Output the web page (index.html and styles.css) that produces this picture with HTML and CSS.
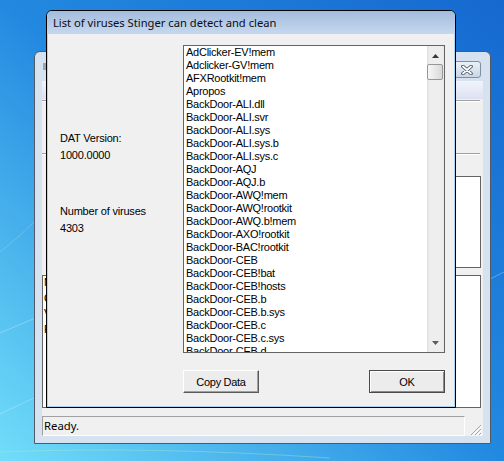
FILE: index.html
```html
<!DOCTYPE html>
<html>
<head>
<meta charset="utf-8">
<title>Stinger</title>
<link rel="stylesheet" href="styles.css">
</head>
<body>
<div class="desktop">
  <svg class="streaks" width="504" height="461" viewBox="0 0 504 461">
    <path d="M0 333 L40 316" stroke="#ffffff" stroke-opacity="0.28" stroke-width="1" fill="none"/>
    <path d="M0 414 L36 397" stroke="#ffffff" stroke-opacity="0.25" stroke-width="1" fill="none"/>
    <path d="M0 252 Q18 238 34 222" stroke="#ffffff" stroke-opacity="0.18" stroke-width="1" fill="none"/>
    <path d="M0 452 Q150 446 330 458" stroke="#b8f0c8" stroke-opacity="0.35" stroke-width="1" fill="none"/>
    <path d="M490 279 L504 272" stroke="#ffffff" stroke-opacity="0.3" stroke-width="1" fill="none"/>
  </svg>

  <div class="bgwin">
    <div class="bg-title">
      <div class="bg-icon"></div>
      <div class="bg-close">
        <svg width="12" height="10" viewBox="0 0 12 10">
          <path d="M2 1.5 L10 8.5 M10 1.5 L2 8.5" stroke="#4a5564" stroke-width="3.6" stroke-linecap="round" fill="none"/>
          <path d="M2 1.5 L10 8.5 M10 1.5 L2 8.5" stroke="#ffffff" stroke-width="1.8" stroke-linecap="round" fill="none"/>
        </svg>
      </div>
    </div>
    <div class="bg-client">
      <div class="menubar"></div>
      <div class="etch"></div>
      <div class="etch lower"></div>
      <div class="upper-box"></div>
      <div class="log-box">
        <div class="log-lines">
          <div>Number of viruses: 4303</div>
          <div>Opening DAT files</div>
          <div>Version 1000.0000</div>
          <div>Ready to scan</div>
        </div>
      </div>
      <div class="statusbar">
        <div class="status-panel">Ready.</div>
        <div class="grip">
          <svg width="13" height="13" viewBox="0 0 13 13">
            <path d="M12 2 L2 12 M12 6 L6 12 M12 10 L10 12" stroke="#a6a6a6" stroke-width="1" fill="none"/>
            <path d="M13 3 L3 13 M13 7 L7 13 M13 11 L11 13" stroke="#ffffff" stroke-width="1" fill="none"/>
          </svg>
        </div>
      </div>
    </div>
  </div>

  <div class="dialog">
    <div class="dlg-title">List of viruses Stinger can detect and clean</div>
    <div class="dlg-body">
      <div class="dlg-main">
        <div class="info">
          <div class="info-label">DAT Version:</div>
          <div class="info-value">1000.0000</div>
          <div class="info-label second">Number of viruses</div>
          <div class="info-value">4303</div>
        </div>
        <div class="listbox">
          <ul class="items">
            <li>AdClicker-EV!mem</li>
            <li>Adclicker-GV!mem</li>
            <li>AFXRootkit!mem</li>
            <li>Apropos</li>
            <li>BackDoor-ALI.dll</li>
            <li>BackDoor-ALI.svr</li>
            <li>BackDoor-ALI.sys</li>
            <li>BackDoor-ALI.sys.b</li>
            <li>BackDoor-ALI.sys.c</li>
            <li>BackDoor-AQJ</li>
            <li>BackDoor-AQJ.b</li>
            <li>BackDoor-AWQ!mem</li>
            <li>BackDoor-AWQ!rootkit</li>
            <li>BackDoor-AWQ.b!mem</li>
            <li>BackDoor-AXO!rootkit</li>
            <li>BackDoor-BAC!rootkit</li>
            <li>BackDoor-CEB</li>
            <li>BackDoor-CEB!bat</li>
            <li>BackDoor-CEB!hosts</li>
            <li>BackDoor-CEB.b</li>
            <li>BackDoor-CEB.b.sys</li>
            <li>BackDoor-CEB.c</li>
            <li>BackDoor-CEB.c.sys</li>
            <li>BackDoor-CEB.d</li>
          </ul>
          <div class="vscroll">
            <div class="sb-btn up">
              <svg width="7" height="4" viewBox="0 0 7 4"><path d="M0 4 L3.5 0 L7 4 Z" fill="#3a3a3a"/></svg>
            </div>
            <div class="sb-track"><div class="sb-thumb"></div></div>
            <div class="sb-btn down">
              <svg width="7" height="4" viewBox="0 0 7 4"><path d="M0 0 L7 0 L3.5 4 Z" fill="#5c5c5c"/></svg>
            </div>
          </div>
        </div>
      </div>
      <div class="dlg-buttons">
        <button class="btn copy">Copy Data</button>
        <button class="btn default">OK</button>
      </div>
    </div>
  </div>
</div>
</body>
</html>
```
FILE: styles.css
```css
* {
  box-sizing: border-box;
}

html,
body {
  margin: 0;
  padding: 0;
}

body {
  width: 504px;
  height: 461px;
  overflow: hidden;
  font-family: "Liberation Sans", Arial, sans-serif;
}

.desktop {
  position: relative;
  width: 504px;
  height: 461px;
  overflow: hidden;
  background: linear-gradient(to bottom left, #1669cf 0%, #2289e0 50%, #72def9 100%);
}

.streaks {
  position: absolute;
  left: 0;
  top: 0;
}

/* ---------- background Stinger window ---------- */
.bgwin {
  position: absolute;
  left: 34px;
  top: 51px;
  width: 457px;
  height: 393px;
  border: 1px solid #505a66;
  border-radius: 6px 6px 0 0;
  background: #d6e2f0;
  padding: 0 7px 7px;
  display: flex;
  flex-direction: column;
}

.bg-title {
  height: 29px;
  flex: none;
  display: flex;
  justify-content: space-between;
  align-items: flex-start;
  padding-top: 9px;
}

.bg-icon {
  width: 14px;
  height: 7px;
  margin: 2px 0 0 1px;
  background: #9aa5b2;
}

.bg-close {
  width: 29px;
  height: 17px;
  margin-right: 2px;
  border: 1px solid #7f8fa3;
  border-radius: 3px;
  background: linear-gradient(#eaf0f7, #cbd6e5);
  display: flex;
  align-items: center;
  justify-content: center;
}

.bg-client {
  flex: 1;
  background: #f0f0f0;
  display: flex;
  flex-direction: column;
}

.menubar {
  height: 18px;
  flex: none;
  background: linear-gradient(#f2f4fb, #dce1f2);
}

.etch {
  flex: none;
  margin: 1px 3px 0 0;
  border-top: 1px solid #a0a0a0;
  border-bottom: 1px solid #ffffff;
}

.etch.lower {
  margin-top: 51px;
}

.upper-box {
  flex: none;
  height: 92px;
  margin: 21px 2px 0 200px;
  border: 1px solid #646464;
  background: #ffffff;
}

.log-box {
  flex: none;
  height: 133px;
  margin: 7px 2px 0 0;
  border: 1px solid #646464;
  background: #ffffff;
  padding-left: 1px;
  overflow: hidden;
  font-size: 11px;
  line-height: 15.7px;
  color: #000;
}

.log-lines {
  margin-top: -1px;
}

.statusbar {
  flex: none;
  height: 20px;
  margin-top: 8px;
  display: flex;
}

.status-panel {
  width: 423px;
  border-top: 1px solid #a0a0a0;
  border-left: 1px solid #a0a0a0;
  border-right: 1px solid #ffffff;
  border-bottom: 1px solid #ffffff;
  padding-left: 1px;
  font-family: "Noto Sans", "Open Sans", sans-serif;
  font-size: 11.3px;
  line-height: 18px;
  color: #000;
}

.grip {
  flex: 1;
  display: flex;
  align-items: flex-end;
  justify-content: flex-end;
  padding-right: 1px;
}

.grip svg {
  display: block;
}

/* ---------- dialog ---------- */
.dialog {
  position: absolute;
  left: 46px;
  top: 10px;
  width: 410px;
  height: 398px;
  border: 1px solid #000;
  border-radius: 6px 6px 0 0;
  overflow: hidden;
  background: #c4d7ee;
  display: flex;
  flex-direction: column;
}

.dlg-title {
  height: 23px;
  flex: none;
  padding-left: 6px;
  background: linear-gradient(#a3bcdc, #c5d8ef);
  font-family: "Noto Sans", "Open Sans", sans-serif;
  font-size: 11.2px;
  line-height: 23px;
  color: #0c0c14;
  white-space: nowrap;
}

.dlg-body {
  flex: 1;
  background: #f0f0f0;
  border: 1px solid #a9d5f3;
  border-top: none;
  padding-top: 11px;
}

.dlg-main {
  display: flex;
}

.info {
  width: 135px;
  padding: 87px 0 0 12px;
  font-size: 11px;
  line-height: 13px;
  letter-spacing: -0.2px;
  color: #000;
}

.info-value {
  margin-top: 4px;
}

.info-label.second {
  margin-top: 43px;
}

.listbox {
  width: 262px;
  height: 308px;
  border: 1px solid #646464;
  background: #ffffff;
  display: flex;
}

.items {
  flex: 1;
  margin: 0;
  padding: 0 0 0 2px;
  list-style: none;
  overflow: hidden;
  font-size: 11px;
  line-height: 13px;
  letter-spacing: -0.25px;
  color: #000;
  white-space: nowrap;
}

.vscroll {
  width: 17px;
  flex: none;
  display: flex;
  flex-direction: column;
  background: linear-gradient(to right, #e0e0e0, #eeeeee 3px, #eeeeee 14px, #e8e8e8);
}

.sb-btn {
  height: 17px;
  flex: none;
  display: flex;
  align-items: center;
  justify-content: center;
}

.sb-btn svg {
  display: block;
}

.sb-btn.up {
  padding-top: 3px;
}

.sb-btn.down {
  padding-bottom: 1px;
}

.sb-track {
  flex: 1;
}

.sb-thumb {
  height: 16px;
  margin: 1px 1px 0 0;
  border: 1px solid #979797;
  border-radius: 2px;
  background: linear-gradient(to right, #f6f6f6, #e7e7e7 55%, #d8d8d8);
}

.dlg-buttons {
  width: 262px;
  margin: 17px 0 0 135px;
  display: flex;
  justify-content: space-between;
}

.btn {
  width: 76px;
  height: 23px;
  padding: 0;
  background: #ececec;
  font-family: "Liberation Sans", Arial, sans-serif;
  font-size: 11px;
  letter-spacing: -0.3px;
  color: #000;
}

.btn.copy {
  border-top: 1px solid #ffffff;
  border-left: 1px solid #ffffff;
  border-right: 1px solid #5a5a5a;
  border-bottom: 1px solid #5a5a5a;
  box-shadow: inset -1px -1px 0 #a0a0a0;
}

.btn.default {
  border: 1px solid #4a4a4a;
  box-shadow: inset 1px 1px 0 #ffffff, inset -1px -1px 0 #8a8a8a;
}
```
